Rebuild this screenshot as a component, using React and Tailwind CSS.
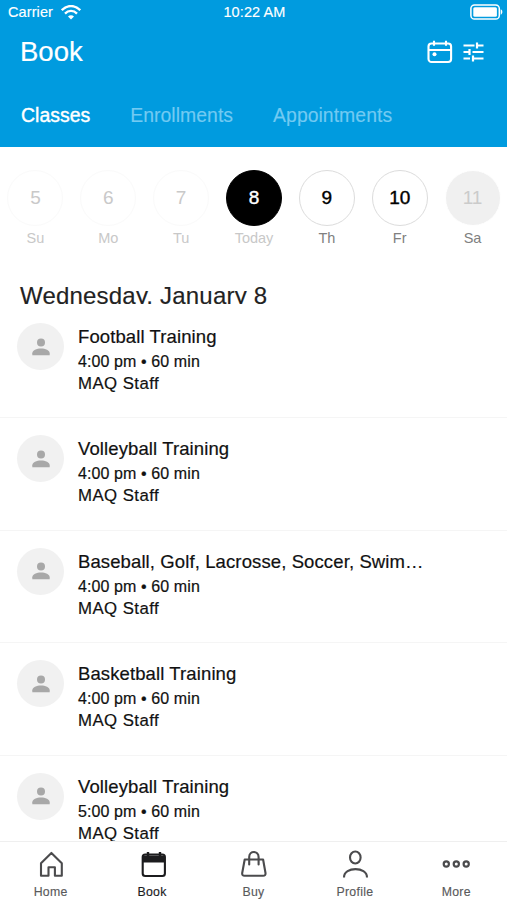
import clsx from 'clsx';

const tabs = ['Classes', 'Enrollments', 'Appointments'];

const days = [
  { date: 5, label: 'Su', state: 'past' },
  { date: 6, label: 'Mo', state: 'past' },
  { date: 7, label: 'Tu', state: 'past' },
  { date: 8, label: 'Today', state: 'selected' },
  { date: 9, label: 'Th', state: 'open' },
  { date: 10, label: 'Fr', state: 'open' },
  { date: 11, label: 'Sa', state: 'closed' },
];

const classes = [
  { id: 1, name: 'Football Training', time: '4:00 pm', length: '60 min', staff: 'MAQ Staff' },
  { id: 2, name: 'Volleyball Training', time: '4:00 pm', length: '60 min', staff: 'MAQ Staff' },
  { id: 3, name: 'Baseball, Golf, Lacrosse, Soccer, Swim…', time: '4:00 pm', length: '60 min', staff: 'MAQ Staff' },
  { id: 4, name: 'Basketball Training', time: '4:00 pm', length: '60 min', staff: 'MAQ Staff' },
  { id: 5, name: 'Volleyball Training', time: '5:00 pm', length: '60 min', staff: 'MAQ Staff' },
];

function WifiIcon() {
  return (
    <svg width="20" height="15" viewBox="0 0 20 15" fill="none" stroke="white" strokeWidth="2.3">
      <path d="M.8 5.2C6-.4 14-.4 19.2 5.2" />
      <path d="M4 8.6c3.4-3.6 8.6-3.6 12 0" />
      <path d="M7 11.6c1.8-1.7 4.2-1.7 6 0L10 14.6z" fill="white" stroke="none" />
    </svg>
  );
}

function BatteryIcon() {
  return (
    <svg width="33" height="16" viewBox="0 0 33 16" fill="none">
      <rect x=".9" y=".9" width="28.4" height="14.2" rx="3.6" stroke="white" strokeWidth="1.5" />
      <rect x="3.3" y="3.2" width="23.6" height="9.6" rx="1.5" fill="white" />
      <path d="M30.7 5.3c2.2.7 2.2 4.7 0 5.4z" fill="white" />
    </svg>
  );
}

function CalendarIcon() {
  return (
    <svg width="26" height="24" viewBox="0 0 26 24" fill="none" stroke="white" strokeWidth="2.1">
      <rect x="1.5" y="3.5" width="22.6" height="18.5" rx="3" />
      <path d="M1.5 10h22.600M7 .8v5M19 .8v5" />
      <circle cx="7.5" cy="14.3" r="2" fill="white" stroke="none" />
    </svg>
  );
}

function FilterIcon() {
  return (
    <svg width="21" height="21" viewBox="0 0 21 21" fill="none" stroke="white" strokeWidth="2.2">
      <path d="M.5 3.5h11M14 3.500h6.500M14 .5v6" />
      <path d="M.5 10H6M6.500 7v6M9.500 10h11" />
      <path d="M.5 16.500H7M10 13.500v6M10 16.500h10.500" />
    </svg>
  );
}

function HomeIcon() {
  return (
    <svg width="28" height="30" viewBox="0 0 28 30" fill="none" stroke="#4b4b4d" strokeWidth="2.1" strokeLinejoin="round">
      <path d="M4 13.200 14.400 2.900l10.400 10.300v12.600h-6.900v-8.600h-6.400v8.600H4z" />
    </svg>
  );
}

function BookIcon() {
  return (
    <svg width="28" height="30" viewBox="0 0 28 30" fill="none" stroke="#1c1c1e" strokeWidth="2.1">
      <rect x="4.700" y="4.500" width="22.200" height="21.500" rx="2.500" />
      <path d="M4.700 5.500h22.200v7H4.700z" fill="#1c1c1e" stroke="none" />
      <path d="M10 2V6M22 2V6" strokeWidth="2.400" />
    </svg>
  );
}

function BuyIcon() {
  return (
    <svg width="28" height="30" viewBox="0 0 28 30" fill="none" stroke="#4b4b4d" strokeWidth="2.1" strokeLinejoin="round" strokeLinecap="round">
      <path d="M5.700 9.500h18.400L26.500 23q.3 2.800-2.400 2.800H5.600Q2.900 25.800 3.200 23z" />
      <path d="M10.200 14.500V6.900c0-6.500 9.400-6.500 9.400 0v7.600" />
    </svg>
  );
}

function ProfileIcon() {
  return (
    <svg width="28" height="30" viewBox="0 0 28 30" fill="none" stroke="#4b4b4d" strokeWidth="2.1">
      <ellipse cx="14.300" cy="7.500" rx="5.300" ry="6" />
      <path d="M3 27.500C3 16.300 26 16.300 26 27.500" />
    </svg>
  );
}

function MoreIcon() {
  return (
    <svg width="28" height="30" viewBox="0 0 28 30" fill="none" stroke="#4b4b4d" strokeWidth="2.2">
      <circle cx="4.300" cy="14" r="2.600" />
      <circle cx="14.300" cy="14" r="2.600" />
      <circle cx="24.200" cy="14" r="2.600" />
    </svg>
  );
}

const navItems = [
  { label: 'Home', Icon: HomeIcon },
  { label: 'Book', Icon: BookIcon, active: true },
  { label: 'Buy', Icon: BuyIcon },
  { label: 'Profile', Icon: ProfileIcon },
  { label: 'More', Icon: MoreIcon },
];

function Day({ day }) {
  return (
    <div className="flex flex-col items-center">
      <div
        className={clsx(
          'flex size-14 items-center justify-center rounded-full border pt-px text-[19px]',
          day.state === 'past' && 'border-[#fafafa] text-[#c9c9c9]',
          day.state === 'selected' && 'border-black bg-black text-white [-webkit-text-stroke:0.4px]',
          day.state === 'open' && 'border-[#dcdcdc] text-black [-webkit-text-stroke:0.4px]',
          day.state === 'closed' && 'border-white bg-[#f0f0f0] text-[#cbcbcb]'
        )}
      >
        {day.date}
      </div>
      <div
        className={clsx(
          'mt-[3px] text-[14.5px] leading-[18px]',
          day.state === 'past' || day.state === 'selected' ? 'text-[#c8c8c8]' : 'text-[#808080]'
        )}
      >
        {day.label}
      </div>
    </div>
  );
}

function ClassRow({ item }) {
  return (
    <li className="flex h-[112.4px] shrink-0 border-b border-[#f5f5f5] pl-[17px] pt-[18px]">
      <div className="-mt-px flex size-[47px] items-center justify-center rounded-full bg-[#f1f1f1]">
        <svg width="18" height="18" viewBox="0 0 18 18" fill="#a8a8a8">
          <circle cx="9" cy="4.500" r="4" />
          <path d="M.3 17.300v-2C.3 8.800 17.700 8.800 17.700 15.300v2z" />
        </svg>
      </div>
      <div className="ml-3.5 text-[#111] [-webkit-text-stroke:0.2px]">
        <h3 className="text-[18.5px] leading-[26px] tracking-[0.11px]">{item.name}</h3>
        <p className="pt-px text-[16px] leading-[22px] tracking-[0.1px]">
          {item.time} • {item.length}
        </p>
        <p className="text-[16.8px] leading-[22px] tracking-[0.45px]">{item.staff}</p>
      </div>
    </li>
  );
}

export default function App() {
  return (
    <div className="flex h-[900px] w-[507px] flex-col overflow-hidden bg-white font-['Liberation_Sans',Arial,sans-serif]">
      <header className="h-[147px] shrink-0 bg-[#009bdf] text-white">
        <div className="grid h-6 grid-cols-3 items-center pl-2 pr-1 pt-px text-[14.5px] [-webkit-text-stroke:0.15px]">
          <div className="flex items-center gap-2">
            <span className="tracking-[0.1px]">Carrier</span>
            <WifiIcon />
          </div>
          <div className="pr-0.5 text-center tracking-[0.1px]">10:22 AM</div>
          <div className="flex justify-end pb-px">
            <BatteryIcon />
          </div>
        </div>
        <div className="flex h-14 items-center justify-between pl-5 pr-[23px]">
          <h1 className="text-[27.5px] [-webkit-text-stroke:0.2px]">Book</h1>
          <div className="flex items-center gap-2.5">
            <CalendarIcon />
            <FilterIcon />
          </div>
        </div>
        <nav className="flex h-[70px] items-center gap-10 pl-[21px] pt-px">
          {tabs.map((tab) => (
            <button
              key={tab}
              className={clsx(
                'text-[19.4px] tracking-[0.04px]',
                tab === 'Classes' ? 'text-white [-webkit-text-stroke:0.4px]' : 'text-[#72caf2] [-webkit-text-stroke:0.15px]'
              )}
            >
              {tab}
            </button>
          ))}
        </nav>
      </header>

      <main className="flex min-h-0 flex-1 flex-col overflow-hidden">
        <div className="-ml-px grid w-[510px] shrink-0 grid-cols-7 pt-[23px]">
          {days.map((day) => (
            <Day key={day.date} day={day} />
          ))}
        </div>

        {/* the list header is shorter than its text, so the descenders are cut */}
        <h2 className="mb-0.5 mt-8 h-[25px] shrink-0 overflow-hidden pl-5 text-[24px] leading-[34px] tracking-[0.2px] text-[#222] [-webkit-text-stroke:0.15px]">
          Wednesday, January 8
        </h2>

        <ul className="flex flex-col">
          {classes.map((item) => (
            <ClassRow key={item.id} item={item} />
          ))}
        </ul>
      </main>

      <nav className="grid h-[59px] shrink-0 grid-cols-5 border-t border-[#efefef] bg-white pt-2">
        {navItems.map(({ label, Icon, active }) => (
          <button key={label} className="flex flex-col items-center">
            <Icon />
            <span
              className={clsx(
                'mt-1 text-[12.3px] leading-[16px] tracking-[0.3px] [-webkit-text-stroke:0.15px]',
                active ? 'text-[#1c1c1e]' : 'text-[#5a5a5c]'
              )}
            >
              {label}
            </span>
          </button>
        ))}
      </nav>
    </div>
  );
}
